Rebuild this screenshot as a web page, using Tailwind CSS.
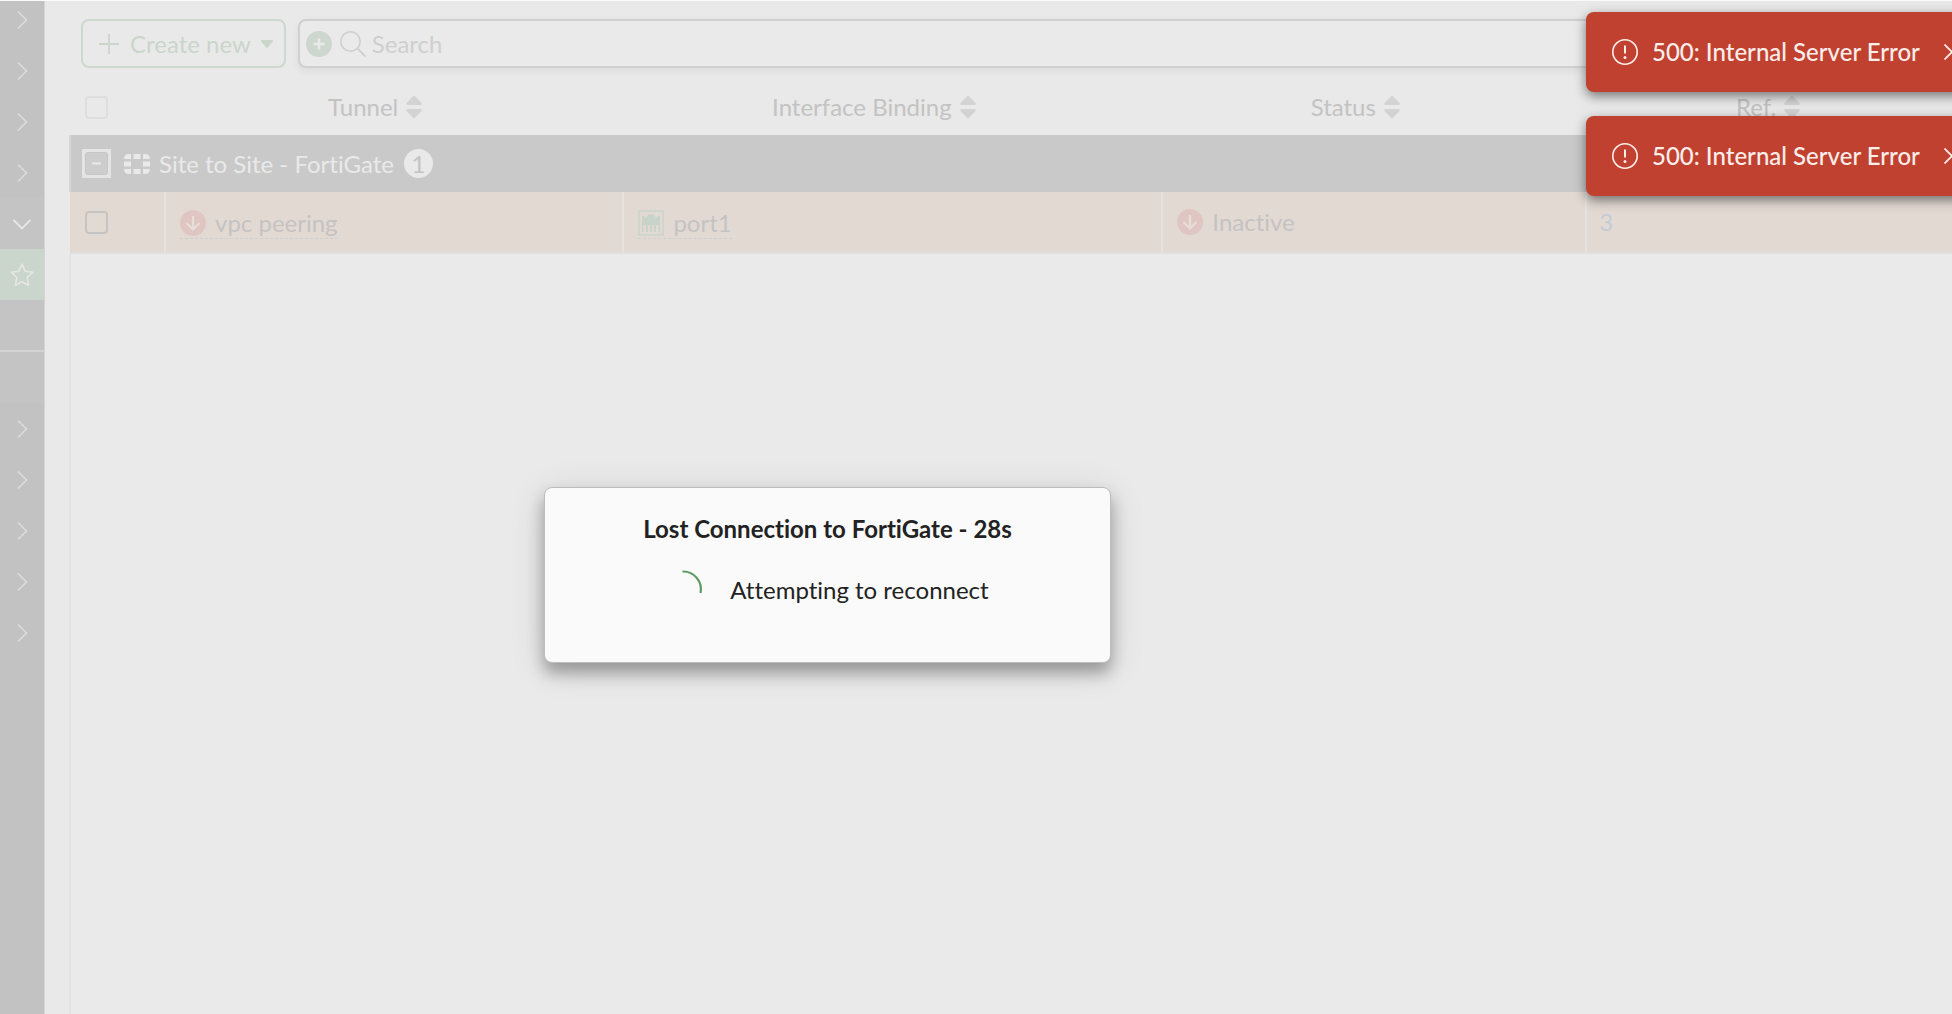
<!DOCTYPE html>
<html lang="en">
<head>
<meta charset="utf-8">
<meta name="viewport" content="width=device-width, initial-scale=1">
<title>IPsec Tunnels</title>
<script src="https://cdn.jsdelivr.net/npm/@tailwindcss/browser@4"></script>
</head>
<body class="relative flex min-h-screen overflow-hidden border-t border-[#fafafa] bg-[#e9e9e9] font-['Lato',sans-serif] text-2xl text-[#c3c3c3] [font-variant-ligatures:none]">

<!-- Icon definitions -->
<svg class="hidden">
  <symbol id="chev-r" viewBox="0 0 20 20"><path d="M6 1.500l8.500 8.500L6 18.500" fill="none" stroke="currentColor" stroke-width="1.600"/></symbol>
  <symbol id="chev-d" viewBox="0 0 20 20"><path d="M1.500 6l8.500 8.500L18.500 6" fill="none" stroke="currentColor" stroke-width="1.800"/></symbol>
  <symbol id="sort" viewBox="0 0 16 24"><path d="M7 1.200q1-1 2 0l6.500 6.800q.8 2-1 2h-13q-1.800 0-1-2zM7 22.800q1 1 2 0l6.500-6.800q.8-2-1-2h-13q-1.800 0-1 2z" fill="currentColor"/></symbol>
  <symbol id="down" viewBox="0 0 26 26"><circle cx="13" cy="13" r="13" fill="#dfc6c2"/><path d="M13 6v13M6.500 13l6.500 6.500 6.500-6.500" fill="none" stroke="#e8ddd8" stroke-width="2.200"/></symbol>
  <symbol id="alert" viewBox="0 0 26 26"><circle cx="13" cy="13" r="12.200" fill="none" stroke="currentColor" stroke-width="1.600"/><path d="M13 6.500v8" stroke="currentColor" stroke-width="2"/><circle cx="13" cy="18.500" r="1.500" fill="currentColor"/></symbol>
  <symbol id="close" viewBox="0 0 16 16"><path d="M.5.500l15 15M15.500.500l-15 15" fill="none" stroke="currentColor" stroke-width="1.700"/></symbol>
</svg>

<!-- Navigation edge -->
<nav aria-label="Main" class="w-[45px] shrink-0 border-r border-[#d4d4d4] bg-[#c2c2c2] text-[#dcdcdc]">
  <div class="-mt-[7px] flex flex-col">
    <button aria-label="Expand" class="flex h-[51px] items-center justify-center"><svg class="size-5"><use href="#chev-r"/></svg></button>
    <button aria-label="Expand" class="flex h-[51px] items-center justify-center"><svg class="size-5"><use href="#chev-r"/></svg></button>
    <button aria-label="Expand" class="flex h-[51px] items-center justify-center"><svg class="size-5"><use href="#chev-r"/></svg></button>
    <button aria-label="Expand" class="flex h-[51px] items-center justify-center"><svg class="size-5"><use href="#chev-r"/></svg></button>
    <div class="flex flex-col bg-[#c4c4c4] text-[#e6e6e6]">
      <button aria-label="Collapse" class="flex h-[51px] items-center justify-center"><svg class="size-5"><use href="#chev-d"/></svg></button>
      <button aria-label="Favorite" class="flex h-[51px] items-center justify-center bg-[#cad5cb]">
        <svg class="size-6" viewBox="0 0 24 24"><path d="M12 1.200l3.200 7 7.600 1-5.600 5.300 1.400 7.700L12 18.700l-6.600 3.500 1.400-7.700L1.200 9.200l7.600-1z" fill="none" stroke="currentColor" stroke-width="1.600" stroke-linejoin="round"/></svg>
      </button>
      <div class="h-[52px] border-b-2 border-[#d3d3d3]"></div>
      <div class="h-[51px]"></div>
    </div>
    <button aria-label="Expand" class="flex h-[51px] items-center justify-center"><svg class="size-5"><use href="#chev-r"/></svg></button>
    <button aria-label="Expand" class="flex h-[51px] items-center justify-center"><svg class="size-5"><use href="#chev-r"/></svg></button>
    <button aria-label="Expand" class="flex h-[51px] items-center justify-center"><svg class="size-5"><use href="#chev-r"/></svg></button>
    <button aria-label="Expand" class="flex h-[51px] items-center justify-center"><svg class="size-5"><use href="#chev-r"/></svg></button>
    <button aria-label="Expand" class="flex h-[51px] items-center justify-center"><svg class="size-5"><use href="#chev-r"/></svg></button>
  </div>
</nav>

<main class="flex min-w-0 flex-1 flex-col pl-6">
  <div class="flex gap-3 pt-[18px] pl-3">
    <button class="flex h-[49px] shrink-0 items-center rounded-lg border-2 border-[#cdd8ce] pr-[11px] pl-4 text-[#cad5cb]">
      <svg class="mr-[11px] size-5" viewBox="0 0 20 20"><path d="M10 0v20M0 10h20" stroke="currentColor" stroke-width="1.800"/></svg>
      Create new
      <svg class="ml-[10px] h-2 w-3" viewBox="0 0 12 8"><path d="M.8 0h10.400q1.200.6.400 1.800L7 7.300q-1 1-2 0L.4 1.800Q-.4.600.8 0z" fill="currentColor"/></svg>
    </button>
    <div class="flex h-[49px] flex-1 items-center rounded-l-lg border-2 border-r-0 border-[#d0d0d0] bg-[#eaeaea] pl-[6px] shadow-[0_3px_8px_rgba(0,0,0,0.06)]">
      <button aria-label="Add filter"><svg class="size-[26px]" viewBox="0 0 26 26"><circle cx="13" cy="13" r="13" fill="#cdd7ce"/><path d="M13 7.500v11M7.500 13h11" stroke="#eaeaea" stroke-width="2.400"/></svg></button>
      <svg class="ml-2 size-[26px]" viewBox="0 0 26 26"><circle cx="10.500" cy="10.500" r="9.700" fill="none" stroke="#cfcfcf" stroke-width="1.600"/><path d="M17.500 17.500l8 8" stroke="#cfcfcf" stroke-width="1.800"/></svg>
      <input type="text" aria-label="Search" placeholder="Search" class="ml-[6px] min-w-0 flex-1 outline-none placeholder:text-[#cfcfcf]">
    </div>
  </div>

  <div class="mt-[11px] flex flex-1 flex-col overflow-hidden">
    <table class="w-[calc(100%+36px)] table-fixed border-collapse text-left">
      <colgroup><col class="w-[95px]"><col class="w-[23.9%]"><col class="w-[28.1%]"><col class="w-[22.1%]"><col></colgroup>
      <thead>
        <tr class="h-14">
          <th class="pl-[15px]"><input type="checkbox" aria-label="Select all" class="block size-[23px] appearance-none rounded-sm border-2 border-[#dedede]"></th>
          <th class="pr-[38px] font-normal"><div class="flex items-center justify-center gap-2">Tunnel <svg class="h-6 w-4 text-[#d3d3d3]"><use href="#sort"/></svg></div></th>
          <th class="pr-[38px] font-normal"><div class="flex items-center justify-center gap-2">Interface Binding <svg class="h-6 w-4 text-[#d3d3d3]"><use href="#sort"/></svg></div></th>
          <th class="pr-[38px] font-normal"><div class="flex items-center justify-center gap-2">Status <svg class="h-6 w-4 text-[#d3d3d3]"><use href="#sort"/></svg></div></th>
          <th class="pr-[38px] font-normal"><div class="flex items-center justify-center gap-2">Ref. <svg class="h-6 w-4 text-[#d3d3d3]"><use href="#sort"/></svg></div></th>
        </tr>
      </thead>
      <tbody>
        <tr class="h-[57px] border-l-2 border-[#d6d6d6] bg-[#c9c9c9] text-[#e9e9e9]">
          <td colspan="5" class="pl-[11px]">
            <div class="flex items-center">
              <button aria-label="Collapse group"><svg class="block size-[29px]" viewBox="0 0 29 29"><rect width="29" height="29" fill="#e4e4e4"/><rect x="3.500" y="3.500" width="22" height="22" rx="2" fill="#cdcdcd" stroke="#c6c6c6"/><path d="M10 14.500h9" stroke="#e9e9e9" stroke-width="2"/></svg></button>
              <svg class="ml-[13px] h-5 w-[26px]" viewBox="0 0 26 20" fill="currentColor"><path d="M0 5Q0 0 5 0h2v5zM9.500 0h7v5h-7zM19 0h2q5 0 5 5h-7zM0 7.500h7v5H0zM19 7.500h7v5h-7zM0 15h7v5H5q-5 0-5-5zM9.500 15h7v5h-7zM19 15h7q0 5-5 5h-2z"/></svg>
              <span class="ml-[9px]">Site to Site - FortiGate</span>
              <span class="ml-[10px] flex size-[29px] items-center justify-center rounded-full bg-[#e9e9e9] text-[#c3c3c3]">1</span>
            </div>
          </td>
        </tr>
        <tr class="h-[61px] border-b-2 border-[#e0e0e0] bg-[#e3d9d3]">
          <td class="border-r-2 border-[#e5e2e0] pl-[15px]"><input type="checkbox" aria-label="Select vpc peering" class="block size-[23px] appearance-none rounded-sm border-2 border-[#c6c4c2]"></td>
          <td class="border-r-2 border-[#e5e2e0] pl-[14px]"><div class="flex pt-[3px]"><a href="#" class="flex h-[31px] items-center gap-[9px] border-b border-dashed border-[#cfcfcf]"><svg class="size-[26px]"><use href="#down"/></svg>vpc peering</a></div></td>
          <td class="border-r-2 border-[#e5e2e0] pl-[14px]"><div class="flex pt-[3px]"><a href="#" class="flex h-[31px] items-center gap-[9px] border-b border-dashed border-[#cfcfcf]"><svg class="size-[26px]" viewBox="0 0 26 26"><rect x="1" y="1" width="24" height="24" fill="none" stroke="#cdd6cb" stroke-width="1.800"/><path d="M4 6h2l2 2 2-3.500h6L18 8l2-2h2v16h-1.500v-7H18v7h-2v-7h-2v7h-2v-7h-2v7H8v-7H5.500v7H4z" fill="#c8d4ca"/></svg>port1</a></div></td>
          <td class="border-r-2 border-[#e5e2e0] pl-[14px]"><div class="flex items-center gap-[9px]"><svg class="size-[26px]"><use href="#down"/></svg>Inactive</div></td>
          <td class="pl-3"><a href="#" class="text-[#c3ccd6]">3</a></td>
        </tr>
      </tbody>
    </table>
    <div class="flex-1 border-l-2 border-[#e2e2e2] bg-[#eaeaea]"></div>
  </div>
</main>

<!-- Error notifications -->
<div class="absolute top-[11px] -right-9 flex w-[402px] flex-col gap-6 font-medium text-[#fbeeeb]">
  <div role="alert" class="flex h-20 items-center rounded-lg bg-[#c14130] pl-[26px] shadow-[0_4px_12px_rgba(0,0,0,0.5)]">
    <svg class="size-[26px] shrink-0"><use href="#alert"/></svg>
    <span class="ml-[14px] whitespace-nowrap">500: Internal Server Error</span>
    <button aria-label="Dismiss" class="ml-6 shrink-0"><svg class="size-4"><use href="#close"/></svg></button>
  </div>
  <div role="alert" class="flex h-20 items-center rounded-lg bg-[#c14130] pl-[26px] shadow-[0_4px_12px_rgba(0,0,0,0.5)]">
    <svg class="size-[26px] shrink-0"><use href="#alert"/></svg>
    <span class="ml-[14px] whitespace-nowrap">500: Internal Server Error</span>
    <button aria-label="Dismiss" class="ml-6 shrink-0"><svg class="size-4"><use href="#close"/></svg></button>
  </div>
</div>

<!-- Connection dialog -->
<div role="dialog" aria-labelledby="dlg-title" class="absolute top-[486px] left-[544px] w-[567px] rounded-lg border border-[#bdbdbd] bg-[#fafafa] px-6 pt-[23px] pb-[53px] text-center text-[#222222] shadow-[0_10px_16px_rgba(0,0,0,0.3),0_6px_36px_rgba(0,0,0,0.12)]">
  <h1 id="dlg-title" class="leading-9 font-bold">Lost Connection to FortiGate - 28s</h1>
  <div class="mt-6 flex items-start justify-center gap-[26px] leading-[38px]">
    <svg class="size-[38px] overflow-visible" viewBox="0 0 38 38"><path d="M16.500 .500A17.800 17.800 0 0 1 34.500 22" fill="none" stroke="#5b9a60" stroke-width="2.200"/></svg>
    Attempting to reconnect
  </div>
</div>
</body>
</html>
